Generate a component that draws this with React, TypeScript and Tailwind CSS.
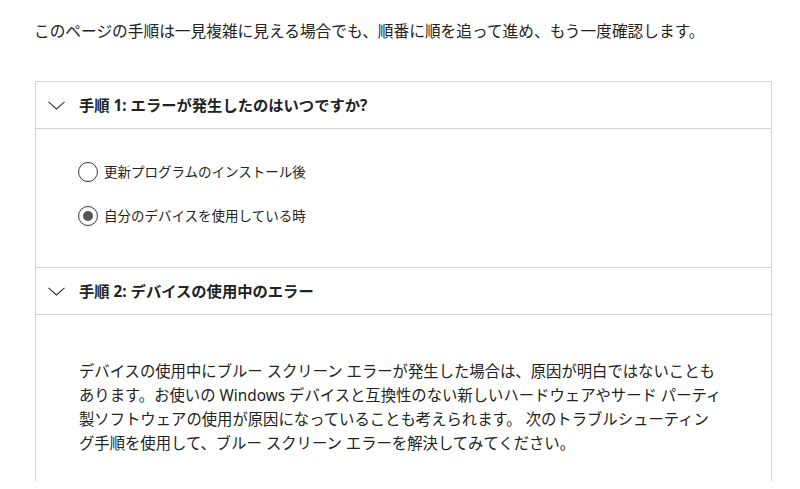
import React from "react";

function Chevron() {
  return (
    <svg width="17" height="9" viewBox="0 0 17 9" className="shrink-0">
      <polyline points="0.5,0.8 8.5,8 16.5,0.8" fill="none" stroke="#333" strokeWidth="1.1" />
    </svg>
  );
}

function Radio({ checked, label }: { checked?: boolean; label: string }) {
  return (
    <div className="flex items-center h-[20px]">
      <div className="w-[20px] h-[20px] rounded-full border border-[#333] flex items-center justify-center shrink-0 bg-white">
        {checked && <div className="w-[10px] h-[10px] rounded-full bg-[#555]" />}
      </div>
      <span className="ml-[6px] text-[13.5px] leading-[20px]">{label}</span>
    </div>
  );
}

export default function App() {
  return (
    <div
      className="w-[800px] h-[489px] overflow-hidden bg-white text-[#222]"
      style={{ fontFamily: '"Noto Sans", "Noto Sans CJK JP", sans-serif' }}
    >
      <p className="pl-[34px] pt-[21px] text-[15.7px] leading-[20px] whitespace-nowrap">
        このページの手順は一見複雑に見える場合でも、順番に順を追って進め、もう一度確認します。
      </p>
      <div className="mt-[40px] ml-[35px] w-[737px] h-[400px] border border-b-0 border-[#d2d2d2]">
        <div className="h-[47px] border-b border-[#d2d2d2] flex items-center pl-[12px]">
          <Chevron />
          <span className="ml-[14px] text-[15.3px] font-bold leading-[20px]">
            手順 1: エラーが発生したのはいつですか?
          </span>
        </div>
        <div className="h-[139px] border-b border-[#d2d2d2] pl-[42px] pt-[33px] flex flex-col gap-[24px]">
          <Radio label="更新プログラムのインストール後" />
          <Radio checked label="自分のデバイスを使用している時" />
        </div>
        <div className="h-[47px] border-b border-[#d2d2d2] flex items-center pl-[12px]">
          <Chevron />
          <span className="ml-[14px] text-[15.3px] font-bold leading-[20px]">
            手順 2: デバイスの使用中のエラー
          </span>
        </div>
        <div className="pl-[43px] pt-[44px]">
          <p className="text-[15.35px] leading-[24px] whitespace-nowrap">
            デバイスの使用中にブルー スクリーン エラーが発生した場合は、原因が明白ではないことも
            <br />
            あります。お使いの Windows デバイスと互換性のない新しいハードウェアやサード パーティ
            <br />
            製ソフトウェアの使用が原因になっていることも考えられます。 次のトラブルシューティン
            <br />
            グ手順を使用して、ブルー スクリーン エラーを解決してみてください。
          </p>
        </div>
      </div>
    </div>
  );
}
